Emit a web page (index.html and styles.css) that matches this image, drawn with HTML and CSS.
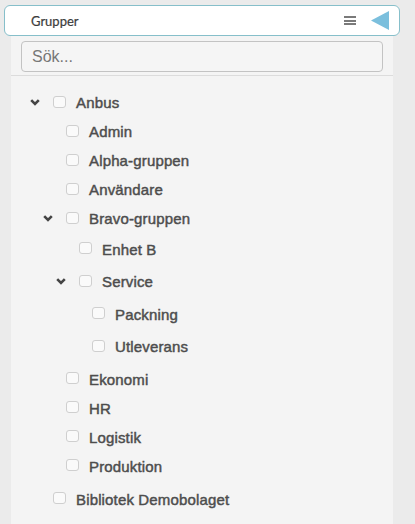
FILE: index.html
```html
<!DOCTYPE html>
<html lang="sv">
<head>
<meta charset="utf-8">
<title>Grupper</title>
<link rel="stylesheet" href="styles.css">
</head>
<body>
<div class="header">
  <span class="title">Grupper</span>
  <span class="menu"><span></span><span></span><span></span></span>
  <svg class="collapse" width="18" height="19" viewBox="0 0 18 19"><polygon points="0,9.5 18,0 18,19" fill="#7bbfdd"/></svg>
</div>
<div class="panel">
  <div class="search-wrap">
    <input class="search" type="text" placeholder="Sök...">
  </div>
  <ul class="tree">
    <li>
      <div class="row"><span class="toggle"><svg width="10" height="7" viewBox="0 0 10 7"><polyline points="1.2,1.2 5,5 8.8,1.2" fill="none" stroke="#444" stroke-width="2.6"/></svg></span><span class="cb"></span><span class="label">Anbus</span></div>
      <ul class="children top">
        <li><div class="row"><span class="toggle"></span><span class="cb"></span><span class="label">Admin</span></div></li>
        <li><div class="row"><span class="toggle"></span><span class="cb"></span><span class="label">Alpha-gruppen</span></div></li>
        <li><div class="row"><span class="toggle"></span><span class="cb"></span><span class="label">Användare</span></div></li>
        <li>
          <div class="row"><span class="toggle"><svg width="10" height="7" viewBox="0 0 10 7"><polyline points="1.2,1.2 5,5 8.8,1.2" fill="none" stroke="#444" stroke-width="2.6"/></svg></span><span class="cb"></span><span class="label">Bravo-gruppen</span></div>
          <ul class="children">
            <li><div class="row"><span class="toggle"></span><span class="cb"></span><span class="label">Enhet B</span></div></li>
            <li>
              <div class="row"><span class="toggle"><svg width="10" height="7" viewBox="0 0 10 7"><polyline points="1.2,1.2 5,5 8.8,1.2" fill="none" stroke="#444" stroke-width="2.6"/></svg></span><span class="cb"></span><span class="label">Service</span></div>
              <ul class="children">
                <li><div class="row"><span class="toggle"></span><span class="cb"></span><span class="label">Packning</span></div></li>
                <li><div class="row"><span class="toggle"></span><span class="cb"></span><span class="label">Utleverans</span></div></li>
              </ul>
            </li>
          </ul>
        </li>
        <li><div class="row"><span class="toggle"></span><span class="cb"></span><span class="label">Ekonomi</span></div></li>
        <li><div class="row"><span class="toggle"></span><span class="cb"></span><span class="label">HR</span></div></li>
        <li><div class="row"><span class="toggle"></span><span class="cb"></span><span class="label">Logistik</span></div></li>
        <li><div class="row"><span class="toggle"></span><span class="cb"></span><span class="label">Produktion</span></div></li>
      </ul>
    </li>
    <li><div class="row"><span class="toggle"></span><span class="cb"></span><span class="label">Bibliotek Demobolaget</span></div></li>
  </ul>
</div>
</body>
</html>
```
FILE: styles.css
```css
html, body {
  margin: 0;
  padding: 0;
  height: 524px;
  overflow: hidden;
  background: #ebebeb;
}

.header {
  box-sizing: border-box;
  height: 31px;
  margin: 5px 15px 0 4px;
  background: #fff;
  border: 1px solid #86bfca;
  border-radius: 6px;
  display: flex;
  align-items: center;
  padding: 0 10px 0 26px;
}

.title {
  flex: 1;
  font-family: Lato, "Open Sans", sans-serif;
  font-size: 13px;
  color: #3c3c3c;
  -webkit-text-stroke: 0.2px #3c3c3c;
}

.menu {
  display: flex;
  flex-direction: column;
  gap: 1.5px;
  width: 12px;
  margin-right: 15px;
}

.menu span {
  display: block;
  height: 2px;
  background: #7a7a7a;
}

.collapse {
  display: block;
}

.panel {
  margin: 0 22px 0 11px;
  background: #f4f4f4;
  height: 488px;
}

.search-wrap {
  padding: 5px 10px 3px;
  border-bottom: 1px solid #dcdcdc;
}

.search {
  display: block;
  box-sizing: border-box;
  width: 100%;
  height: 31px;
  margin: 0;
  padding: 0 10px;
  border: 1px solid #c3c3c3;
  border-radius: 4px;
  background: #f5f5f5;
  font-family: "Liberation Sans", Arial, sans-serif;
  font-size: 16px;
  color: #444;
  outline: none;
}

.search::placeholder {
  color: #777;
}

.tree, .children {
  list-style: none;
  margin: 0;
  padding: 0;
}

.tree {
  padding: 12px 0 0 19px;
}

.children {
  padding-left: 13px;
  margin-bottom: 1.5px;
}

.children.top {
  margin-bottom: 4px;
}

.row {
  display: flex;
  align-items: center;
  height: 29px;
}

.children .children .row {
  height: 32.5px;
}

.toggle {
  width: 23px;
  flex: none;
  display: flex;
  align-items: center;
}

.toggle svg {
  display: block;
}

.cb {
  box-sizing: border-box;
  flex: none;
  width: 13px;
  height: 12px;
  margin-right: 10px;
  margin-bottom: 2px;
  border: 1px solid #cfcfcf;
  border-radius: 3px;
  background: #fafafa;
}

.label {
  font-family: "Liberation Sans", Arial, sans-serif;
  font-size: 15px;
  color: #4d4d4d;
  letter-spacing: 0.15px;
  -webkit-text-stroke: 0.45px #4d4d4d;
  white-space: nowrap;
}
```
